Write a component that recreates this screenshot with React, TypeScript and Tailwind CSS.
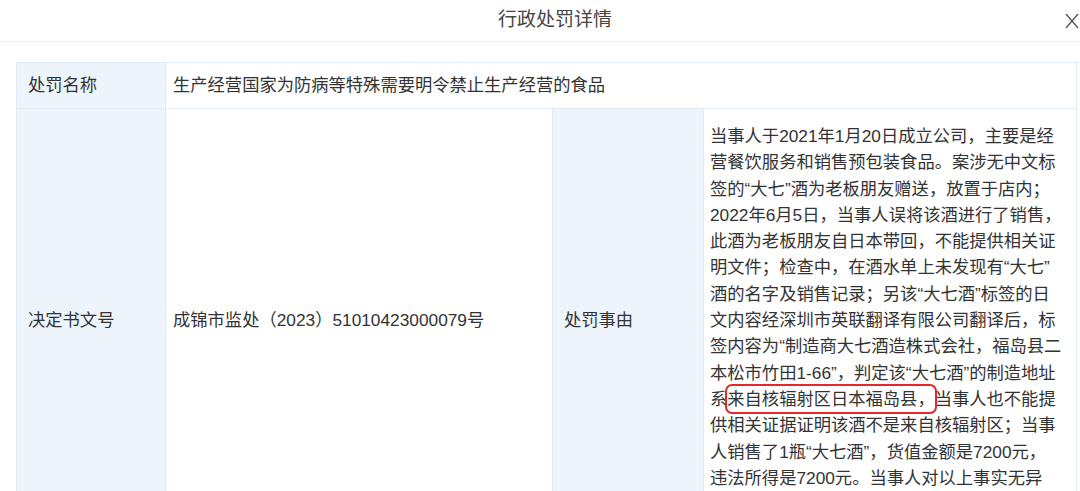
// @ts-nocheck
import React from 'react';

const reasonLines: React.ReactNode[] = [
  '当事人于2021年1月20日成立公司，主要是经',
  '营餐饮服务和销售预包装食品。案涉无中文标',
  '签的“大七”酒为老板朋友赠送，放置于店内；',
  '2022年6月5日，当事人误将该酒进行了销售，',
  '此酒为老板朋友自日本带回，不能提供相关证',
  '明文件；检查中，在酒水单上未发现有“大七”',
  '酒的名字及销售记录；另该“大七酒”标签的日',
  '文内容经深圳市英联翻译有限公司翻译后，标',
  '签内容为“制造商大七酒造株式会社，福岛县二',
  '本松市竹田1-66”，判定该“大七酒”的制造地址',
  (
    <>
      系
      <span className="inline-block h-[26px] rounded-[5px] ring-2 ring-[#e5262b]">来自核辐射区日本福岛县，</span>
      当事人也不能提
    </>
  ),
  '供相关证据证明该酒不是来自核辐射区；当事',
  '人销售了1瓶“大七酒”，货值金额是7200元，',
  '违法所得是7200元。当事人对以上事实无异',
  '议。',
];

const labelCls =
  'bg-[#edf4fc] border-r border-b border-[#e3ebf5] pl-[11px] pr-2 flex items-center';
const valueCls = 'bg-white border-r border-b border-[#e3ebf5] flex items-center';

export default function App() {
  return (
    <div
      className="w-[1080px] bg-white text-[#333] text-[17.3px] leading-[26.3px]"
      style={{ fontFamily: '"Liberation Sans", "Noto Sans CJK SC", sans-serif' }}
    >
      {/* header */}
      <div className="grid grid-cols-[1fr_auto_1fr] items-center h-[42px] border-b border-[#f0f0f0] pl-[30px]">
        <div />
        <div className="text-[19px] text-[#444]">行政处罚详情</div>
        <div className="flex justify-end pr-[1px]">
          <svg width="14" height="16" viewBox="0 0 14 16" className="text-[#555]">
            <path d="M1 1 L13 15 M13 1 L1 15" stroke="currentColor" strokeWidth="1.3" fill="none" />
          </svg>
        </div>
      </div>

      {/* table */}
      <div className="pt-[20px] pl-[16px]">
        <div className="grid grid-cols-[149px_387px_151px_373px] border-l border-t border-[#e3ebf5]">
          <div className={`${labelCls} h-[46px]`}>处罚名称</div>
          <div className={`${valueCls} col-span-3 pl-[7px]`}>生产经营国家为防病等特殊需要明令禁止生产经营的食品</div>

          <div className={labelCls}>决定书文号</div>
          <div className={`${valueCls} pl-[7px]`}>成锦市监处（2023）51010423000079号</div>
          <div className={labelCls}>处罚事由</div>
          <div className="bg-white border-r border-b border-[#e3ebf5] pl-[6px] pt-[14px] pb-[14px]">
            {reasonLines.map((line, i) => (
              <div key={i} className="whitespace-nowrap">
                {line}
              </div>
            ))}
          </div>
        </div>
      </div>
    </div>
  );
}
